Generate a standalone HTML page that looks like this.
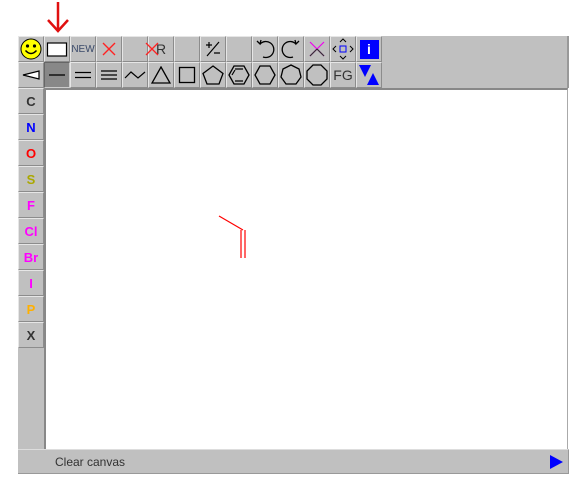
<!DOCTYPE html>
<html><head><style>
*{margin:0;padding:0;box-sizing:border-box}
body{width:585px;height:491px;background:#fff;position:relative;overflow:hidden;font-family:"Liberation Sans",sans-serif}
.b{position:absolute;width:26px;height:26px;background:#c0c0c0;border-top:1px solid #e6e6e6;border-left:1px solid #e6e6e6;border-bottom:1px solid #8c8c8c;border-right:1px solid #8c8c8c;display:flex;align-items:center;justify-content:center;font-size:13px;font-weight:bold}
.b svg{display:block}
</style></head><body>
<svg style="position:absolute;left:46px;top:0" width="24" height="34"><path d="M12 2V30" stroke="#e01010" stroke-width="2.5"/><path d="M2 20L12 31L22 20" stroke="#e01010" stroke-width="2.5" fill="none"/></svg>
<div style="position:absolute;left:18px;top:36px;width:551px;height:52px;background:#c0c0c0;border-right:2px solid #999"></div>
<div style="position:absolute;left:18px;top:88px;width:26px;height:386px;background:#c0c0c0"></div>
<div style="position:absolute;left:44px;top:88px;width:524px;height:361px;background:#fff;border-left:2px solid #888;border-top:2px solid #888;border-right:1px solid #aaa"></div>
<div style="position:absolute;left:18px;top:449px;width:551px;height:25px;background:#c0c0c0;border-top:1px solid #ddd;border-bottom:1px solid #999;border-right:1px solid #999"></div>
<div style="position:absolute;left:55px;top:455px;font-size:12px;color:#333">Clear canvas</div>
<svg style="position:absolute;left:550px;top:455px" width="14" height="14"><path d="M0 0L13 7L0 14Z" fill="#0000ff"/></svg>

<div class="b" style="left:18px;top:36px"><svg width="22" height="22"><circle cx="11" cy="11" r="10" fill="#ff0" stroke="#000"/><circle cx="7.5" cy="8" r="1.6"/><circle cx="14.5" cy="8" r="1.6"/><path d="M5.5 12.5Q11 18.5 16.5 12.5" stroke="#000" stroke-width="1.5" fill="none"/></svg></div>
<div class="b" style="left:44px;top:36px"><svg width="22" height="16"><rect x="1.5" y="2" width="19" height="13" fill="#fff" stroke="#000" stroke-width="1.2"/></svg></div>
<div class="b" style="left:70px;top:36px;font-size:10px;font-weight:normal;color:#3a4a6a">NEW</div>
<div class="b" style="left:96px;top:36px"><svg width="14" height="14"><path d="M1 1L13 13M13 1L1 13" stroke="#f22" stroke-width="1.4"/></svg></div>
<div class="b" style="left:122px;top:36px"></div>
<div class="b" style="left:148px;top:36px;font-weight:normal;font-size:14px;color:#333"><span style="position:relative">R<svg style="position:absolute;left:-11px;top:1px" width="14" height="14"><path d="M1 1L13 13M13 1L1 13" stroke="#f22" stroke-width="1.3"/></svg></span></div>
<div class="b" style="left:174px;top:36px"></div>
<div class="b" style="left:200px;top:36px"><svg width="18" height="18"><path d="M2 5H8M5 2V8M15 2L3 16M10 13H16" stroke="#000" stroke-width="1.2"/></svg></div>
<div class="b" style="left:226px;top:36px"></div>
<div class="b" style="left:252px;top:36px"><svg width="22" height="22"><path d="M6 6A8 8 0 1 1 9 19" stroke="#000" stroke-width="1.3" fill="none"/><path d="M3 3L6 6L7 2" stroke="#000" stroke-width="1.3" fill="none"/></svg></div>
<div class="b" style="left:278px;top:36px"><svg width="22" height="22"><path d="M16 6A8 8 0 1 0 13 19" stroke="#000" stroke-width="1.3" fill="none"/><path d="M19 3L16 6L15 2" stroke="#000" stroke-width="1.3" fill="none"/></svg></div>
<div class="b" style="left:304px;top:36px"><svg width="20" height="20"><path d="M3 3L17 17M17 3L3 17" stroke="#e0e" stroke-width="1.2"/><path d="M3 17L10 10" stroke="#333" stroke-width="1.2"/><path d="M10 10L17 17" stroke="#333" stroke-width="1.2"/></svg></div>
<div class="b" style="left:330px;top:36px"><svg width="22" height="22"><rect x="8" y="8" width="6" height="6" fill="none" stroke="#00f"/><path d="M8 4L11 1L14 4M8 18L11 21L14 18M4 8L1 11L4 14M18 8L21 11L18 14" stroke="#000" fill="none"/></svg></div>
<div class="b" style="left:356px;top:36px"><div style="width:19px;height:19px;background:#0000ff;color:#fff;font-size:14px;text-align:center;line-height:19px">i</div></div>

<div class="b" style="left:18px;top:62px"><svg width="18" height="10"><path d="M1 5L17 1V9Z" fill="#fff" stroke="#000" stroke-width="1.2"/></svg></div>
<div class="b" style="left:44px;top:62px;background:#888;border-color:#666 #ccc #ccc #666"><svg width="16" height="4"><path d="M0 2H16" stroke="#000" stroke-width="1.3"/></svg></div>
<div class="b" style="left:70px;top:62px"><svg width="16" height="8"><path d="M0 1.5H16M0 6.5H16" stroke="#000" stroke-width="1.3"/></svg></div>
<div class="b" style="left:96px;top:62px"><svg width="16" height="10"><path d="M0 1H16M0 5H16M0 9H16" stroke="#000" stroke-width="1.3"/></svg></div>
<div class="b" style="left:122px;top:62px"><svg width="22" height="10"><path d="M1 8L7 2L14 8L21 2" stroke="#000" stroke-width="1.2" fill="none"/></svg></div>
<div class="b" style="left:148px;top:62px"><svg width="20" height="18"><path d="M10 1L19 17H1Z" fill="none" stroke="#000" stroke-width="1.3"/></svg></div>
<div class="b" style="left:174px;top:62px"><svg width="18" height="18"><rect x="1.5" y="1.5" width="15" height="15" fill="none" stroke="#000" stroke-width="1.3"/></svg></div>
<div class="b" style="left:200px;top:62px"><svg width="22" height="20"><path d="M11 1L21 8.5L17 19H5L1 8.5Z" fill="none" stroke="#000" stroke-width="1.3"/></svg></div>
<div class="b" style="left:226px;top:62px"><svg width="22" height="20"><path d="M6 1H16L21 10L16 19H6L1 10Z" fill="none" stroke="#000" stroke-width="1.3"/><path d="M7 4H15M7 16H15M4 10L7 5" stroke="#000" stroke-width="1.2"/></svg></div>
<div class="b" style="left:252px;top:62px"><svg width="22" height="20"><path d="M6 1H16L21 10L16 19H6L1 10Z" fill="none" stroke="#000" stroke-width="1.3"/></svg></div>
<div class="b" style="left:278px;top:62px"><svg width="22" height="22"><path d="M11 1L19 5L21 13L16 20H6L1 13L3 5Z" fill="none" stroke="#000" stroke-width="1.3"/></svg></div>
<div class="b" style="left:304px;top:62px"><svg width="22" height="22"><path d="M7 1H15L21 7V15L15 21H7L1 15V7Z" fill="none" stroke="#000" stroke-width="1.3"/></svg></div>
<div class="b" style="left:330px;top:62px;font-weight:normal;font-size:14px;color:#333">FG</div>
<div class="b" style="left:356px;top:62px"><svg width="22" height="22"><path d="M1 1H13L7 13Z" fill="#00f"/><path d="M21 21H9L15 9Z" fill="#00f"/></svg></div>

<div class="b" style="left:18px;top:88px;color:#333">C</div>
<div class="b" style="left:18px;top:114px;color:#00f">N</div>
<div class="b" style="left:18px;top:140px;color:#f00">O</div>
<div class="b" style="left:18px;top:166px;color:#aaa800">S</div>
<div class="b" style="left:18px;top:192px;color:#f0f">F</div>
<div class="b" style="left:18px;top:218px;color:#f0f">Cl</div>
<div class="b" style="left:18px;top:244px;color:#f0f">Br</div>
<div class="b" style="left:18px;top:270px;color:#f0f">I</div>
<div class="b" style="left:18px;top:296px;color:#ffb000">P</div>
<div class="b" style="left:18px;top:322px;color:#333">X</div>

<svg style="position:absolute;left:205px;top:205px" width="50" height="60"><path d="M14 11L38 25M36 25V53M40 25V53" stroke="#f00" stroke-width="1.2" fill="none"/></svg>
</body></html>
